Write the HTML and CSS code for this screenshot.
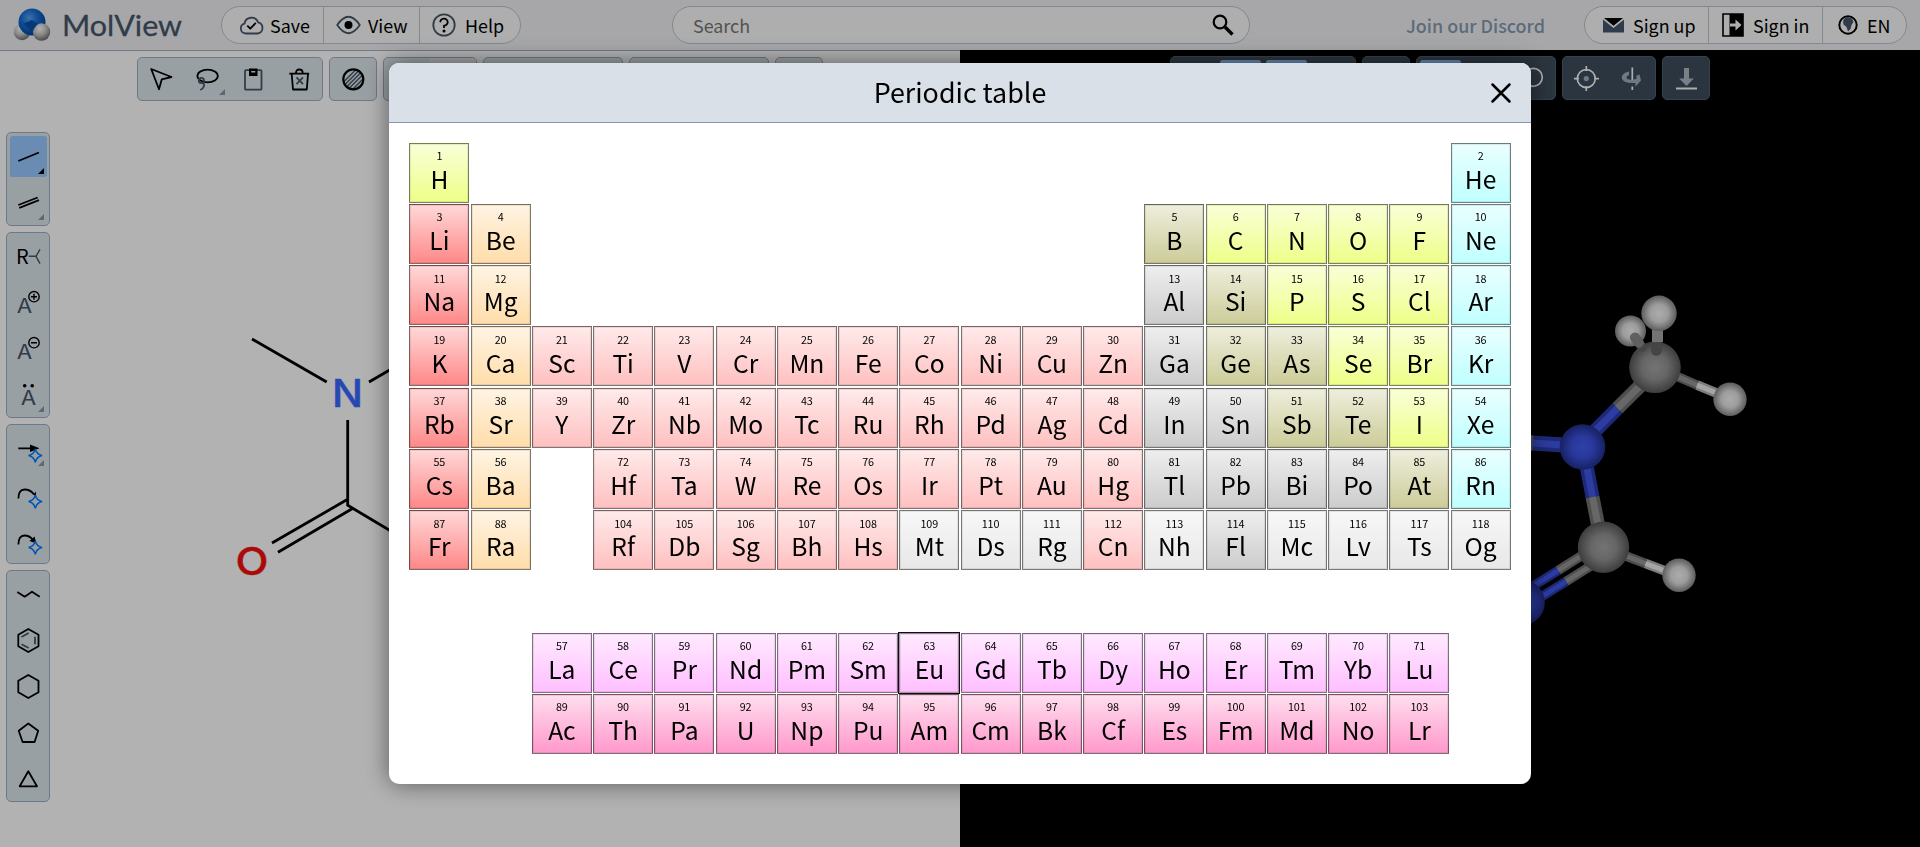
FILE: index.html
```html
<!DOCTYPE html>
<html lang="en">
<head>
<meta charset="utf-8">
<title>MolView</title>
<link rel="stylesheet" href="styles.css">
</head>
<body>
<svg class="defs" width="0" height="0" aria-hidden="true">
  <defs>
    <radialGradient id="gO" cx=".4" cy=".35" r=".65"><stop offset="0" stop-color="#5aa2f0"/><stop offset=".45" stop-color="#1a70d8"/><stop offset="1" stop-color="#00489c"/></radialGradient>
    <radialGradient id="gW" cx=".4" cy=".3" r=".75"><stop offset="0" stop-color="#fff"/><stop offset=".5" stop-color="#c4c4c4"/><stop offset="1" stop-color="#606060"/></radialGradient>
    <radialGradient id="ballC"><stop offset="0" stop-color="#a6a6a6"/><stop offset=".5" stop-color="#929292"/><stop offset="1" stop-color="#585858"/></radialGradient>
    <radialGradient id="ballH"><stop offset="0" stop-color="#f6f6f6"/><stop offset=".5" stop-color="#e0e0e0"/><stop offset="1" stop-color="#858585"/></radialGradient>
    <radialGradient id="ballN"><stop offset="0" stop-color="#455cf6"/><stop offset=".5" stop-color="#3a50dc"/><stop offset="1" stop-color="#212f8c"/></radialGradient>
    <path id="star" d="M19.3 12.9Q20.5 18.3 26 19.6Q20.5 20.9 19.3 26.3Q18.100 20.900 12.600 19.600Q18.100 18.300 19.300 12.900Z"/>
  </defs>
</svg>

<header class="topbar">
  <div class="brand">
    <svg class="logo" width="36" height="34" viewBox="0 0 36 34">
      <circle cx="8" cy="24" r="8.300" fill="url(#gW)"/>
      <circle cx="18" cy="14" r="13.500" fill="url(#gO)"/>
      <circle cx="27.500" cy="24" r="8.700" fill="url(#gW)"/>
      <path d="M9 16Q16 20 18 27.500Q19 20 24 16L18 12Z" fill="#0a52ad"/>
    </svg>
    <svg width="124" height="34" viewBox="0 0 124 34"><text class="wordmark" x="-1" y="27.500" textLength="120" lengthAdjust="spacingAndGlyphs">MolView</text></svg>
  </div>
  <nav class="pill pill-main">
    <a class="pill-item item-save"><svg class="ico" width="25" height="24" viewBox="0 0 25 24"><path class="slate" d="M6.500 20.500A5 5 0 0 1 5.500 10.700A7 7 0 0 1 19 9.300A5.700 5.700 0 0 1 18.700 20.500Z"/><path class="ink" d="M8.300 12.600L11.300 15.600L16.800 9.800"/></svg><span>Save</span></a>
    <a class="pill-item item-view"><svg class="ico" width="25" height="24" viewBox="0 0 25 24"><path class="slate" d="M1.200 12Q12.500 -4.500 23.800 12Q12.500 28.500 1.200 12Z"/><circle cx="12.500" cy="12" r="4" fill="#000"/></svg><span>View</span></a>
    <a class="pill-item item-help"><svg class="ico" width="24" height="24" viewBox="0 0 24 24"><circle class="slate" cx="12" cy="12" r="10.700"/><path class="ink" d="M8.300 9.300A3.700 3.500 0 1 1 12 12.600V15"/><circle cx="12" cy="18" r="1.500"/></svg><span>Help</span></a>
  </nav>
  <div class="search"><span>Search</span><svg width="22" height="22" viewBox="0 0 22 22"><circle cx="8" cy="8" r="6.300" fill="none" stroke="#000" stroke-width="2.200"/><path d="M13 13L20.500 20.500" stroke="#000" stroke-width="3.400"/></svg></div>
  <a class="discord">Join our Discord</a>
  <nav class="pill pill-account">
    <a class="pill-item item-signup"><svg class="ico" width="21" height="24" viewBox="0 0 21 24"><path d="M0 6.500L10.500 15L21 6.500V19.500H0Z" fill="#46576a"/><path d="M1 5H20L10.500 12.800Z"/></svg><span>Sign up</span></a>
    <a class="pill-item item-signin"><svg class="ico" width="22" height="24" viewBox="0 0 22 24"><path d="M1 1H21V23H1Z" fill="none" stroke="#000" stroke-width="1.600"/><path d="M7.500 1H21V23H7.500Z"/><path d="M8 10.500H13.500V6.500L19.500 12L13.500 17.500V13.500H8Z" fill="#f8faf8"/></svg><span>Sign in</span></a>
    <a class="pill-item item-lang"><svg class="ico" width="20" height="24" viewBox="0 0 20 24"><circle cx="10" cy="12" r="8.700" fill="none" stroke="#000" stroke-width="2"/><path d="M6 6L9 4L14 5.500L15.500 9L13.500 12L12.500 16L10 18.500L8.500 14L5.500 11.500L5 8.500Z" fill="#46576a"/></svg><span>EN</span></a>
  </nav>
</header>

<main class="workspace">
  <section class="sketcher">
    <div class="toolbar">
      <div class="group">
        <a class="tool"><svg width="24" height="24"><path class="ink" d="M2.200 2L22.500 10L12.800 12.300L10 22.300Z"/></svg></a>
        <a class="tool more"><svg width="24" height="24"><ellipse class="ink" cx="12.600" cy="9" rx="10.200" ry="6.300"/><circle class="slate" cx="6.400" cy="13.500" r="2.600"/><path class="slate" d="M7 16Q10 16.500 8.800 19.500Q8 22 5.300 23"/></svg></a>
        <a class="tool"><svg width="24" height="24"><rect class="slate" x="4" y="3.200" width="16.500" height="19.500" rx="1"/><path d="M8 1.500H16.500V9H8Z"/><path d="M10.200 4.800H14.300" stroke="#dce5ea" stroke-width="1.500"/></svg></a>
        <a class="tool"><svg width="24" height="24"><path class="ink" d="M2.300 6.700H22.200M4.700 7L6 22.500H19.800L21 7M9 6Q9 2.500 12.300 2.500Q15.700 2.500 15.700 6"/><path class="slate" d="M9.500 10.300L16 17.200M16 10.300L9.500 17.200"/></svg></a>
      </div>
      <div class="group"><a class="tool"><svg width="24" height="24"><path class="hatch" d="M3.500 14L14 3.500M3.500 18L18 3.500M5.500 20L20 5.500M8.500 21L21.500 8M12.500 21.500L22 12"/><circle class="ink heavy" cx="12.300" cy="12.300" r="10"/></svg></a></div>
      <div class="group"><a class="tool"></a><a class="tool dim"></a></div>
      <div class="group"><a class="tool"></a><a class="tool"></a><a class="tool"></a></div>
      <div class="group"><a class="tool"></a><a class="tool"></a><a class="tool"></a></div>
      <div class="group"><a class="tool"></a></div>
    </div>
    <div class="sidebar">
      <div class="group">
        <a class="tool more selected"><svg width="24" height="24"><path class="ink" d="M2.300 17L23 8.500"/></svg></a>
        <a class="tool more"><svg width="24" height="24"><path class="ink" d="M2.300 15L21.700 7.500M3.300 17.800L23 10.200"/></svg></a>
      </div>
      <div class="group">
        <a class="tool"><svg width="24" height="24"><text class="glyph black" x="0" y="19.500">R</text><path class="slate thin" d="M12.700 12.300H20M24 5.300L20 12.300L24 19.700"/></svg></a>
        <a class="tool"><svg width="24" height="24"><text class="glyph" x="1.200" y="22.700" textLength="14.500" lengthAdjust="spacingAndGlyphs">A</text><circle class="ink thin" cx="18" cy="6.700" r="5.200"/><path class="ink thin" d="M15 6.700H21M18 3.700V9.700"/></svg></a>
        <a class="tool"><svg width="24" height="24"><text class="glyph" x="1.200" y="22.700" textLength="14.500" lengthAdjust="spacingAndGlyphs">A</text><circle class="ink thin" cx="18" cy="6.700" r="5.200"/><path class="ink thin" d="M15 6.700H21"/></svg></a>
        <a class="tool more"><svg width="24" height="24"><text class="glyph" x="5.200" y="23" textLength="14.500" lengthAdjust="spacingAndGlyphs">A</text><circle cx="8.700" cy="3.700" r="1.800"/><circle cx="16.200" cy="3.700" r="1.800"/></svg></a>
      </div>
      <div class="group">
        <a class="tool more"><svg width="24" height="24"><path class="ink" d="M2.300 12.300H16"/><path d="M14 8.600L23.500 12.300L14 16Z"/><use href="#star" class="spark"/></svg></a>
        <a class="tool"><svg width="24" height="24"><path class="ink" d="M2.400 16.500Q2.400 7.500 8.500 7.500Q14.500 7.500 18 12.500"/><path d="M17.500 12.500L20 9.500L20 14.500Z"/><use href="#star" class="spark"/></svg></a>
        <a class="tool"><svg width="24" height="24"><path class="ink" d="M2.400 16.500Q2.400 7.500 8.500 7.500Q13.500 7.500 16.500 11.500"/><path d="M13.500 13L18.500 8.500L20.500 15.500Z"/><use href="#star" class="spark"/></svg></a>
      </div>
      <div class="group">
        <a class="tool"><svg width="24" height="24"><path class="ink" d="M1.300 10L8.700 14.700L16 9.700L23.700 14.700"/></svg></a>
        <a class="tool"><svg width="24" height="24"><path class="ink" d="M12.300 1L22.500 6.700V18.300L12.300 24L2.300 18.300V6.700Z"/><path class="slate" d="M19 8.700V16.300M5.500 9L12.700 5M5.500 16.300L12.700 20"/></svg></a>
        <a class="tool"><svg width="24" height="24"><path class="ink" d="M12.300 1L22.500 6.700V18.300L12.300 24L2.300 18.300V6.700Z"/></svg></a>
        <a class="tool"><svg width="24" height="24"><path class="ink" d="M12.300 3.500L22.200 10.800L18.600 22H6.600L2.700 10.800Z"/></svg></a>
        <a class="tool"><svg width="24" height="24"><path class="ink" d="M12.300 5.200L21 20.300H3.700Z"/></svg></a>
      </div>
    </div>
    <svg class="drawing" width="960" height="796" viewBox="0 51 960 796">
      <path class="bond" d="M252 339L326.700 382M369 382L400 364M347.700 420V505.300L400 536.500M347.700 499.300L272 543M352.500 508.500L278 552.300"/>
      <text class="atom atom-n" x="332" y="407.300" textLength="31" lengthAdjust="spacingAndGlyphs">N</text>
      <text class="atom atom-o" x="235.500" y="574.700" textLength="33" lengthAdjust="spacingAndGlyphs">O</text>
    </svg>
  </section>

  <section class="viewer">
    <div class="toolbar dark">
      <div class="group"><a class="tool"></a><a class="tool selected"></a><a class="tool selected"></a><a class="tool"></a></div>
      <div class="group"><a class="tool"></a></div>
      <div class="group"><a class="tool selected"></a><a class="tool"></a><a class="tool"><svg width="24" height="24"><circle class="light" cx="13.300" cy="11.300" r="9"/><path d="M8 17L12 20.500L8 24Z" fill="#f8faf8"/></svg></a></div>
      <div class="group">
        <a class="tool"><svg width="24" height="24"><circle class="light" cx="12.300" cy="12.600" r="9"/><path class="light" d="M12.300 0V5M12.300 20V25M0 12.600H5M20 12.600H25"/><circle cx="12.300" cy="12.600" r="2.600" fill="#a0aec0"/></svg></a>
        <a class="tool"><svg width="24" height="24"><path class="light" d="M12.300 1.500V14M12.300 20.500V24"/><path d="M9 5.500Q1.500 7 1.700 12Q2.500 17.500 15.500 17V20.500L21 14.500L19.500 8.500L16.500 9.500V13Q7 15 6.500 11.500Q6.500 9.500 9 9Z" fill="#a0aec0"/></svg></a>
      </div>
      <div class="group"><a class="tool"><svg width="24" height="24"><path d="M10 2H15V12.500H19.800L12.500 20L5.200 12.500H10Z" fill="#b0b8c0"/><path class="light heavy" d="M2 22.500H23"/></svg></a></div>
    </div>
    <svg class="model" width="960" height="797" viewBox="960 50 960 797">
      <g class="stick n w15"><path d="M1500 441L1563 445"/><path class="core" d="M1500 441L1563 445"/></g>
      <g class="stick c w15"><path d="M1500 441L1533 443"/></g>
      <circle cx="1630.500" cy="331" r="15.500" fill="url(#ballH)"/>
      <g class="stick c w14"><path d="M1645 381L1617.300 408.500"/><path class="core" d="M1645 381L1617.300 408.500"/></g>
      <g class="stick n w14"><path d="M1617.300 408.500L1595 431"/><path class="core" d="M1617.300 408.500L1595 431"/></g>
      <g class="stick n w14"><path d="M1586 463L1592.500 497"/><path class="core" d="M1586 463L1592.500 497"/></g>
      <g class="stick c w14"><path d="M1592.500 497L1599 530"/><path class="core" d="M1592.500 497L1599 530"/></g>
      <g class="stick c w10"><path d="M1585 553.500L1558 570.500M1593 564.500L1566 581.500"/><path class="core" d="M1585 553.500L1558 570.500M1593 564.500L1566 581.500"/></g>
      <g class="stick n w10"><path d="M1558 570.500L1530 588M1566 581.500L1537 599.500"/><path class="core" d="M1558 570.500L1530 588M1566 581.500L1537 599.500"/></g>
      <g class="stick c w10"><path d="M1675 375.500L1697 385M1622 554.500L1645.500 563.500"/><path class="core" d="M1675 375.500L1697 385M1622 554.500L1645.500 563.500"/></g>
      <g class="stick h w10"><path d="M1697 385L1720 394.500M1645.500 563.500L1668 572"/><path class="core" d="M1697 385L1720 394.500M1645.500 563.500L1668 572"/></g>
      <circle cx="1655" cy="367.300" r="25.800" fill="url(#ballC)"/>
      <path d="M1635 337.500L1642 347" stroke="#636363" stroke-width="9.500" stroke-linecap="round"/>
      <path d="M1635 337.500L1639 343" stroke="#8a8a8a" stroke-width="9.500" stroke-linecap="round"/>
      <path d="M1657.500 326V342" stroke="#a6a6a6" stroke-width="11"/>
      <path d="M1656.700 342V351" stroke="#646464" stroke-width="11"/>
      <ellipse cx="1656.300" cy="351" rx="5.200" ry="5" fill="#646464"/>
      <circle cx="1659" cy="313.300" r="17.700" fill="url(#ballH)"/>
      <circle cx="1730" cy="399.300" r="16.700" fill="url(#ballH)"/>
      <circle cx="1582.500" cy="447" r="22.800" fill="url(#ballN)"/>
      <circle cx="1603.500" cy="547.200" r="25.700" fill="url(#ballC)"/>
      <circle cx="1679" cy="575.300" r="16.700" fill="url(#ballH)"/>
      <circle cx="1522" cy="602.500" r="22.800" fill="url(#ballN)"/>
    </svg>
  </section>
</main>

<div class="overlay">
  <div class="dialog" role="dialog" aria-label="Periodic table">
    <div class="dialog-head"><h1>Periodic table</h1><svg class="close" width="20" height="20"><path d="M1.500 1.500L18.500 18.500M18.500 1.500L1.500 18.500"/></svg></div>
    <div class="table" id="table"></div>
  </div>
</div>
<script src="script.js"></script>
</body>
</html>
```
FILE: styles.css
```css
* { box-sizing: border-box; }
body {
  margin: 0;
  height: 847px;
  overflow: hidden;
  display: flex;
  flex-direction: column;
  background: #fff;
  color: #000;
  font-family: "Noto Sans CJK SC", "Open Sans", sans-serif;
}
svg { display: block; overflow: visible; flex: none; }
.defs { position: absolute; }

/* Shared icon strokes */
.ink { fill: none; stroke: #000; stroke-width: 1.800; stroke-linejoin: round; }
.slate { fill: none; stroke: #46576a; stroke-width: 1.800; stroke-linejoin: round; }
.light { fill: none; stroke: #f8faf8; stroke-width: 1.700; }
.thin { stroke-width: 1.400; }
.heavy { stroke-width: 2.200; }
.hatch { fill: none; stroke: #46576a; stroke-width: 1.500; }
.glyph { font-size: 20px; fill: #46576a; }
.glyph.black { fill: #000; }
.spark { fill: #dce5ea; stroke: #0079ff; stroke-width: 1.500; }

/* Top bar */
.topbar {
  height: 50px;
  flex: none;
  display: flex;
  align-items: center;
  padding: 0 13px 0 14px;
  background: #eff0f3;
  font-size: 17.900px;
  line-height: 24px;
}
.brand { display: flex; align-items: center; gap: 13px; width: 208px; }
.wordmark { font-family: Lato, sans-serif; font-size: 29.500px; font-weight: 400; fill: #46576a; stroke: #46576a; stroke-width: .3; }
.pill, .search {
  height: 38px;
  display: flex;
  border: 1px solid #bac4d1;
  border-radius: 19px;
  background: #f8faf8;
}
.pill-main { margin-left: -1px; }
.pill-item { display: flex; align-items: center; padding-left: 12px; gap: 7px; white-space: nowrap; }
.pill-item span, .search span, .discord { margin-bottom: 1px; }
.pill-item + .pill-item { border-left: 1px solid #bac4d1; }
.item-save { width: 101px; padding-left: 17px; gap: 6px; }
.item-view { width: 96px; }
.item-help { width: 101px; padding-left: 12px; gap: 9px; }
.search { width: 578px; margin-left: 151px; align-items: center; justify-content: space-between; padding: 0 15px 0 20px; color: #757575; }
.discord { margin-left: auto; color: #8499b0; font-weight: 500; }
.pill-account { margin-left: 39px; }
.item-signup { width: 123px; padding-left: 18px; gap: 9px; }
.item-signin { width: 114px; padding-left: 13px; gap: 9px; }
.item-lang { width: 84px; padding-left: 15px; gap: 9px; }

/* Work area */
.workspace { flex: 1; display: grid; grid-template-columns: 960px 960px; }
.sketcher, .viewer { position: relative; }
.sketcher { background: #fff; border-top: 1px solid #a0b0c0; }
.viewer { background: #000; }
.drawing, .model { position: absolute; left: 0; top: 0; }
.toolbar { display: flex; justify-content: center; gap: 6px; padding-top: 6px; }
.group { display: flex; height: 44px; border: 1px solid #a0aec0; border-radius: 5px; background: #dce5ea; overflow: hidden; }
.tool { position: relative; width: 46px; height: 42px; display: flex; align-items: center; justify-content: center; }
.tool.dim { background: #ebedef; }
.tool.more::after {
  content: "";
  position: absolute;
  right: 5px;
  bottom: 5px;
  border-style: solid;
  border-width: 0 0 6px 6px;
  border-color: transparent transparent #8396aa transparent;
}
.tool.more.selected::after { border-bottom-color: #000; right: 3px; bottom: 3px; }
.sidebar { position: relative; z-index: 1; width: 44px; margin: 31px 0 0 6px; display: flex; flex-direction: column; gap: 6px; }
.sidebar .group { flex-direction: column; height: auto; }
.sidebar .tool { width: 42px; height: 46px; }
.sidebar .tool.selected { width: 37px; height: 41px; margin: 2.500px; border-radius: 2.500px; background: #99c9ff; }
.dark .group { background: #3e4d5b; border-color: #4c6070; }
.dark .tool.selected { width: 41px; height: 37px; margin: 2.500px; border-radius: 2.500px; background: #90c0f8; }

/* Structure drawing */
.bond { fill: none; stroke: #000; stroke-width: 2.800; }
.atom { font-family: Inter, sans-serif; font-size: 37.500px; font-weight: 500; stroke-width: .4; }
.atom-n { fill: #3868ff; stroke: #3868ff; }
.atom-o { fill: #f50f0f; stroke: #f50f0f; }

/* Ball and stick model */
.stick path { fill: none; }
.c { stroke: #707070; }
.c .core { stroke: #949494; }
.n { stroke: #2a3cae; }
.n .core { stroke: #4156e6; }
.h { stroke: #b4b4b4; }
.h .core { stroke: #ededed; }
.w15 { stroke-width: 15px; }
.w14 { stroke-width: 14px; }
.w10 { stroke-width: 9.500px; }
.w15 .core, .w14 .core { stroke-width: 7px; }
.w10 .core { stroke-width: 5px; }

/* Dialog */
.overlay { position: fixed; inset: 0; z-index: 10; display: flex; align-items: center; justify-content: center; background: rgba(0, 0, 0, .3); }
.dialog { width: 1142.500px; height: 721px; border-radius: 10px; background: #fff; overflow: hidden; box-shadow: 0 0 25px rgba(0, 0, 0, .5); }
.dialog-head { position: relative; height: 60px; display: flex; align-items: center; justify-content: center; background: #d9e0e8; border-bottom: 1px solid #8099b0; }
.dialog-head h1 { margin: 0 0 2px; font-size: 26.850px; font-weight: 400; line-height: 40px; }
.close { position: absolute; right: 20.500px; top: 19.500px; }
.close path { fill: none; stroke: #000; stroke-width: 2.500; stroke-linecap: round; }
.table { display: grid; grid-template-columns: repeat(18, 60px); grid-auto-rows: 60px; gap: 1.250px; padding: 19.625px 20.625px 0; }
.cell {
  display: flex;
  flex-direction: column;
  align-items: center;
  padding-top: 5.600px;
  border: 1px solid rgba(0, 0, 0, .5);
  box-shadow: inset 0 0 0 1px rgba(0, 0, 0, .08);
  background-image: linear-gradient(rgba(255, 255, 255, .67), rgba(255, 255, 255, 0));
}
.num { font-size: 10.800px; line-height: 12px; }
.sym { margin-top: 1.600px; font-size: 24.600px; line-height: 30px; }
.nonmetal { background-color: #eeff88; }
.alkali { background-color: #ff8888; }
.alkaline { background-color: #ffddaa; }
.transition { background-color: #ffc0c0; }
.metalloid { background-color: #cccc99; }
.metal { background-color: #cccccc; }
.noble { background-color: #c0ffff; }
.unknown { background-color: #e8e8e8; }
.lanthanide { background-color: #ffbfff; }
.actinide { background-color: #ff99cc; }
.focused { border-color: rgba(0, 0, 0, .35); outline: 1px solid #101010; }
```
FILE: script.js
```javascript
// Each run: row, first column, first atomic number, symbols.
const runs = [
  [1, 1, 1, "H"], [1, 18, 2, "He"],
  [2, 1, 3, "Li Be"], [2, 13, 5, "B C N O F Ne"],
  [3, 1, 11, "Na Mg"], [3, 13, 13, "Al Si P S Cl Ar"],
  [4, 1, 19, "K Ca Sc Ti V Cr Mn Fe Co Ni Cu Zn Ga Ge As Se Br Kr"],
  [5, 1, 37, "Rb Sr Y Zr Nb Mo Tc Ru Rh Pd Ag Cd In Sn Sb Te I Xe"],
  [6, 1, 55, "Cs Ba"], [6, 4, 72, "Hf Ta W Re Os Ir Pt Au Hg Tl Pb Bi Po At Rn"],
  [7, 1, 87, "Fr Ra"], [7, 4, 104, "Rf Db Sg Bh Hs Mt Ds Rg Cn Nh Fl Mc Lv Ts Og"],
  [9, 3, 57, "La Ce Pr Nd Pm Sm Eu Gd Tb Dy Ho Er Tm Yb Lu"],
  [10, 3, 89, "Ac Th Pa U Np Pu Am Cm Bk Cf Es Fm Md No Lr"]
];
const kinds = {
  nonmetal: [1, 6, 7, 8, 9, 15, 16, 17, 34, 35, 53],
  metalloid: [5, 14, 32, 33, 51, 52, 85],
  metal: [13, 31, 49, 50, 81, 82, 83, 84, 114],
  unknown: [109, 110, 111, 113, 115, 116, 117, 118]
};
function kindOf(n, row, col) {
  for (const k in kinds) if (kinds[k].includes(n)) return k;
  if (row === 9) return "lanthanide";
  if (row === 10) return "actinide";
  if (col === 1) return "alkali";
  if (col === 2) return "alkaline";
  return col === 18 ? "noble" : "transition";
}
const table = document.getElementById("table");
for (const [row, start, first, list] of runs) {
  list.split(" ").forEach((symbol, i) => {
    const cell = document.createElement("div");
    cell.className = "cell " + kindOf(first + i, row, start + i) + (symbol === "Eu" ? " focused" : "");
    cell.style.gridArea = row + " / " + (start + i);
    cell.innerHTML = '<span class="num">' + (first + i) + '</span><span class="sym">' + symbol + "</span>";
    table.append(cell);
  });
}
```
